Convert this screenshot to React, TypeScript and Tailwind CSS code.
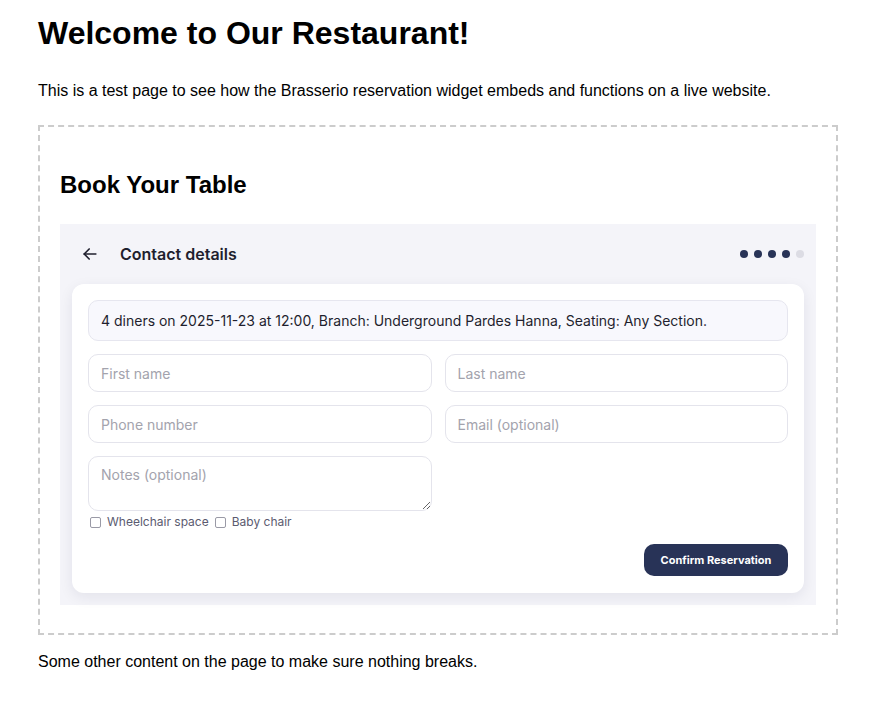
import React from "react";

const inputCls =
  "h-[38px] w-full rounded-[10px] border border-[#e4e4ec] bg-white px-3 text-[14px] text-[#1f1f2e] placeholder:text-[#a3a3ad] outline-none";

const Dots = () => (
  <div className="flex items-center gap-[6px]">
    <span className="h-2 w-2 rounded-full bg-[#283357]" />
    <span className="h-2 w-2 rounded-full bg-[#283357]" />
    <span className="h-2 w-2 rounded-full bg-[#283357]" />
    <span className="h-2 w-2 rounded-full bg-[#283357]" />
    <span className="h-2 w-2 rounded-full bg-[#dcdce4]" />
  </div>
);

const Widget = () => {
  return (
    <div className="bg-[#f4f4f9] p-3 font-['Inter',sans-serif]">
      <div className="flex h-9 items-center justify-between pl-2">
        <div className="flex items-center gap-5">
          <svg width="20" height="20" viewBox="0 0 24 24" fill="none" stroke="#1f1f2e" strokeWidth="2" strokeLinecap="round" strokeLinejoin="round">
            <path d="M19 12H5" />
            <path d="M11 18l-6-6 6-6" />
          </svg>
          <span className="text-[16px] font-semibold text-[#1f1f2e]">Contact details</span>
        </div>
        <Dots />
      </div>

      <div className="mt-3 rounded-xl bg-white px-4 pt-4 pb-[17px] shadow-[0_4px_14px_rgba(30,30,70,0.08)]">
        <div className="flex h-[41px] items-center rounded-[10px] border border-[#e6e6ef] bg-[#f8f8fd] px-3 text-[14px] text-[#1f1f2e]">
          4 diners on 2025-11-23 at 12:00, Branch: Underground Pardes Hanna, Seating: Any Section.
        </div>

        <div className="mt-[13px] grid grid-cols-2 gap-[13px]">
          <input className={inputCls} placeholder="First name" />
          <input className={inputCls} placeholder="Last name" />
          <input className={inputCls} placeholder="Phone number" />
          <input className={inputCls} placeholder="Email (optional)" />
          <textarea
            className="h-[55px] w-full rounded-[10px] border border-[#e4e4ec] bg-white px-3 py-[7px] text-[14px] text-[#1f1f2e] placeholder:text-[#a3a3ad] outline-none"
            placeholder="Notes (optional)"
          />
        </div>

        <div className="mt-[2px] flex items-center gap-[6px] text-[12px] text-[#5b5b70]">
          <label className="flex items-center gap-[6px] pl-[2px]">
            <span className="h-[11px] w-[11px] rounded-[2px] border border-[#9a9aa6] bg-white" />
            Wheelchair space
          </label>
          <label className="flex items-center gap-[6px]">
            <span className="h-[11px] w-[11px] rounded-[2px] border border-[#9a9aa6] bg-white" />
            Baby chair
          </label>
        </div>

        <div className="mt-[13px] flex justify-end">
          <button className="h-8 w-[144px] rounded-[10px] bg-[#283357] text-[11px] font-bold text-white">
            Confirm Reservation
          </button>
        </div>
      </div>
    </div>
  );
};

export default function App() {
  return (
    <div className="min-h-[707px] bg-white px-[38px] font-['Liberation_Sans',Arial,sans-serif] text-black">
      <h1 className="pt-[15px] text-[32px] font-bold leading-[37px]">Welcome to Our Restaurant!</h1>
      <p className="mt-[30px] text-[16px] leading-[18px]">
        This is a test page to see how the Brasserio reservation widget embeds and functions on a live website.
      </p>

      <div className="mt-[25px] w-[800px] border-2 border-dashed border-[#cccccc] px-5 pb-[28px] pt-[44px]">
        <h2 className="text-[24px] font-bold leading-[28px]">Book Your Table</h2>
        <div className="mt-[25px]">
          <Widget />
        </div>
      </div>

      <p className="mt-[18px] text-[16px] leading-[18px]">Some other content on the page to make sure nothing breaks.</p>
    </div>
  );
}
